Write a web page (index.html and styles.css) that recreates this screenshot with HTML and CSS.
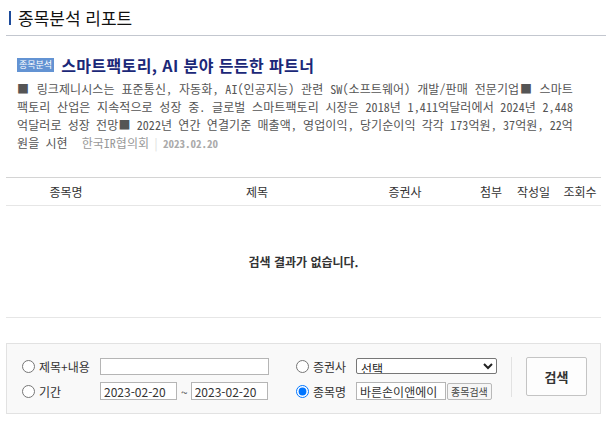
FILE: index.html
```html
<!DOCTYPE html>
<html lang="ko">
<head>
    <meta charset="UTF-8">
    <meta name="viewport" content="width=device-width, initial-scale=1.0">
    <title>종목분석 리포트</title>
    <link rel="stylesheet" href="styles.css">
</head>
<body>
    <div class="page">
        <h2 class="page-title">종목분석 리포트</h2>

        <div class="feature">
            <h3 class="feature-title"><span class="badge">종목분석</span>스마트팩토리, AI 분야 든든한 파트너</h3>
            <p class="feature-text">■ 링크제니시스는 표준통신, 자동화, AI(인공지능) 관련 SW(소프트웨어) 개발/판매 전문기업■ 스마트팩토리 산업은 지속적으로 성장 중. 글로벌 스마트팩토리 시장은 2018년 1,411억달러에서 2024년 2,448억달러로 성장 전망■ 2022년 연간 연결기준 매출액, 영업이익, 당기순이익 각각 173억원, 37억원, 22억원을 시현 <span class="source">한국IR협의회</span><span class="sep">|</span><span class="date">2023.02.20</span></p>
        </div>

        <table class="report-list">
            <thead>
                <tr>
                    <th class="col-name">종목명</th>
                    <th class="col-title">제목</th>
                    <th class="col-firm">증권사</th>
                    <th class="col-file">첨부</th>
                    <th class="col-date">작성일</th>
                    <th class="col-hit">조회수</th>
                </tr>
            </thead>
            <tbody>
                <tr>
                    <td colspan="6" class="empty">검색 결과가 없습니다.</td>
                </tr>
            </tbody>
        </table>

        <form class="search-box" onsubmit="return false">
            <div class="fields">
                <label class="opt"><input type="radio" name="type">제목+내용</label>
                <div class="ctrl"><input type="text" class="txt txt-wide"></div>
                <label class="opt"><input type="radio" name="type">증권사</label>
                <div class="ctrl">
                    <select class="firm-select">
                        <option>선택</option>
                    </select>
                </div>

                <label class="opt"><input type="radio" name="type">기간</label>
                <div class="ctrl">
                    <input type="text" class="txt txt-date" value="2023-02-20">
                    <span class="tilde">~</span>
                    <input type="text" class="txt txt-date" value="2023-02-20">
                </div>
                <label class="opt"><input type="radio" name="type" checked>종목명</label>
                <div class="ctrl">
                    <input type="text" class="txt txt-stock" value="바른손이앤에이">
                    <button type="button" class="btn-small">종목검색</button>
                </div>
            </div>
            <div class="divider"></div>
            <button type="submit" class="btn-search">검색</button>
        </form>
    </div>
</body>
</html>
```

FILE: styles.css
```css
body {
    margin: 0;
    padding: 0;
    background: #fff;
    font-family: "Noto Sans CJK KR", "Noto Sans", sans-serif;
    color: #333;
}

.page {
    padding: 0 5px 0 6px;
}

.page-title {
    margin: 0;
    padding: 8px 0 7px 3px;
    border-bottom: 1px solid #c3c7cf;
    font-size: 17px;
    font-weight: normal;
    line-height: 20px;
    color: #111;
    display: flex;
    align-items: center;
}

.page-title::before {
    content: "";
    width: 2px;
    height: 14px;
    background: #1d4b9b;
    margin-right: 7px;
}

.feature {
    padding: 20px 33px 0 11px;
    height: 121px;
}

.feature-title {
    margin: 0;
    display: flex;
    align-items: center;
    font-size: 16px;
    line-height: 18px;
    font-weight: bold;
    letter-spacing: 0.4px;
    color: #1b2878;
}

.badge {
    display: inline-block;
    background: #6393d3;
    color: #fff;
    font-size: 9px;
    font-weight: normal;
    letter-spacing: 0;
    line-height: 14px;
    padding: 0 2px;
    margin-right: 7px;
}

/* half-width latin, closer to the gulim look */
.feature-text {
    margin: 6px 0 0 0;
    font-size: 12px;
    font-feature-settings: "hwid";
    letter-spacing: 0.1px;
    line-height: 18px;
    color: #555;
    text-align: justify;
}

.source,
.sep,
.date {
    display: inline-block;
    font-size: 12px;
    line-height: 16px;
    letter-spacing: 0;
}

.source {
    color: #999;
    margin-left: 8px;
}

.sep {
    color: #ddd;
    margin: 0 4px;
}

.date {
    font-size: 11px;
    color: #aaa;
    font-weight: bold;
}

.report-list {
    width: 595px;
    border-collapse: collapse;
    table-layout: fixed;
}

.report-list th {
    height: 27px;
    padding: 0;
    border-top: 1px solid #d4d4d4;
    border-bottom: 1px solid #e6e6e6;
    font-size: 12px;
    font-weight: normal;
    color: #333;
    text-align: center;
}

.col-name { width: 120px; }
.col-title { width: 230px; padding-left: 16px !important; }
.col-firm { width: 66px; padding-right: 36px !important; }
.col-file { width: 34px; }
.col-date { width: 51px; }
.col-hit { width: 42px; }

.report-list td.empty {
    height: 111px;
    border-bottom: 1px solid #e6e6e6;
    text-align: center;
    font-size: 12px;
    font-weight: bold;
    color: #333;
    padding: 0;
}

.search-box {
    margin-top: 25px;
    width: 595px;
    box-sizing: border-box;
    height: 71px;
    border: 1px solid #e2e2e2;
    background: #f9f9f9;
    padding: 13px 0 0 15px;
    display: flex;
    align-items: flex-start;
}

.fields {
    display: grid;
    grid-template-columns: 78px 196px 60px 141px;
    grid-auto-rows: 18px;
    row-gap: 7px;
}

.opt {
    display: flex;
    align-items: center;
    font-size: 12px;
    color: #333;
}

.opt input {
    width: 13px;
    height: 13px;
    margin: 0 4px 0 0;
}

.ctrl {
    display: flex;
    align-items: center;
}

.txt {
    box-sizing: border-box;
    height: 18px;
    border: 1px solid #b5b5b5;
    background: #fff;
    padding: 0 3px;
    font-family: "Noto Sans CJK KR", sans-serif;
    font-size: 12px;
    color: #333;
}

.txt-wide { width: 169px; height: 17px; }
.txt-date { width: 77px; }
.txt-stock { width: 90px; }

.tilde {
    font-size: 12px;
    color: #555;
    margin: 0 3px 0 4px;
}

.firm-select {
    width: 141px;
    height: 16px;
    font-family: "Noto Sans CJK KR", sans-serif;
    font-size: 12px;
    padding: 0;
    border: 1px solid #777;
    border-radius: 2px;
    background: #fff;
    color: #222;
}

.btn-small {
    height: 17px;
    margin-left: 1px;
    padding: 0 3px;
    border: 1px solid #b9b9b9;
    border-radius: 2px;
    background: #f6f6f6;
    font-family: "Noto Sans CJK KR", sans-serif;
    font-size: 10px;
    color: #444;
    line-height: 15px;
}

.divider {
    width: 1px;
    height: 40px;
    background: #e2e2e2;
    margin-left: 14px;
}

.btn-search {
    width: 61px;
    height: 39px;
    margin-left: 14px;
    border: 1px solid #c4c4c4;
    border-radius: 2px;
    background: #fdfdfd;
    font-family: "Noto Sans CJK KR", sans-serif;
    font-size: 13px;
    font-weight: bold;
    color: #333;
    cursor: pointer;
}
```
